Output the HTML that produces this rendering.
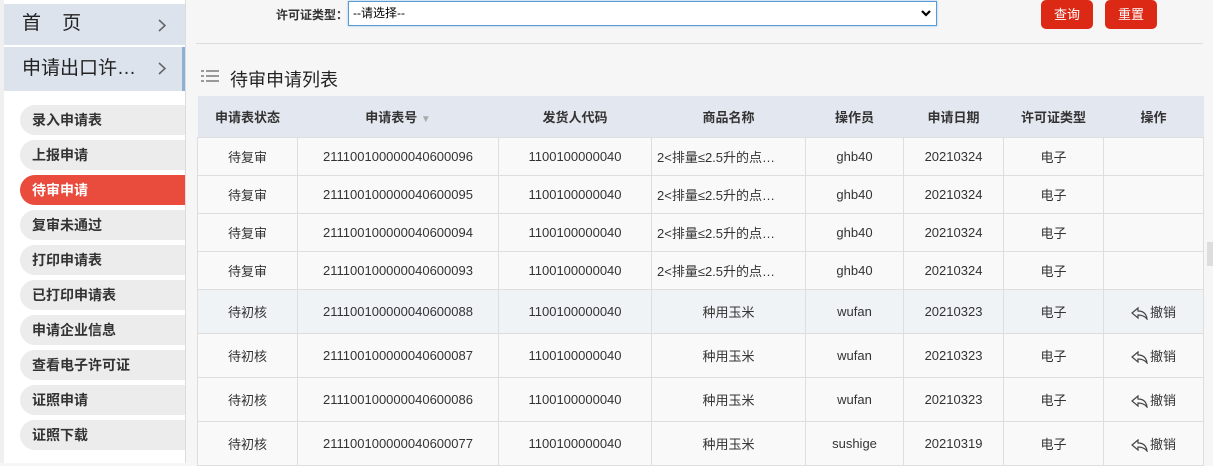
<!DOCTYPE html><html><head><meta charset="utf-8"><style>
*{margin:0;padding:0;box-sizing:border-box}
body{width:1213px;height:463px;overflow:hidden;background:#f6f6f6;font-family:"Liberation Sans","Noto Sans CJK SC",sans-serif;position:relative;color:#333}
.sb{position:absolute;left:0;top:0;width:186px;height:463px;background:#fff;border-right:1px solid #dcdcdc}
.sb:before{content:"";position:absolute;left:0;top:0;width:4px;height:463px;background:#f0f0f0}
.top{position:absolute;left:4px;width:181px;background:#dde3ec;font-size:19px;color:#222;padding-left:18px}
.top svg{position:absolute;right:19px;top:15px}
.sub{position:absolute;left:20px;width:165px;height:30px;background:#ececec;border-radius:15px 0 0 15px;font-size:14px;font-weight:bold;color:#333;line-height:30px;padding-left:12px}
.sub.on{background:#e94b3c;color:#fff}
.lbl{position:absolute;left:276px;top:6px;font-size:12px;font-weight:bold;color:#333}
.sel{position:absolute;left:348px;top:1px;width:589px;height:25px;border:1px solid #5b9bd5;background:#fff;font-size:12px;line-height:23px;padding-left:4px;color:#000;box-shadow:0 0 2px #8bbde8}
.btn{position:absolute;top:0;width:52px;height:29px;background:#dc2916;border-radius:5px;color:#fff;font-size:13px;text-align:center;line-height:29px}
.hr{position:absolute;left:196px;top:43px;width:1007px;height:1px;background:#ddd}
.title{position:absolute;left:230px;top:66px;font-size:18px;color:#222}
table{position:absolute;left:197px;top:96px;border-collapse:collapse;font-size:13px;table-layout:fixed}
th{background:#e3e7ef;height:41px;font-weight:bold;color:#333;border:none}
td{border:1px solid #dedede;text-align:center;background:#f9f9f9;color:#333;white-space:nowrap;overflow:hidden}
tr.a td{height:38px}tr.b td{height:44px}
tr.h td{background:#f0f3f6}
.ud svg{vertical-align:-3px;margin-right:1px}
</style></head><body>
<div class="sb">
<div class="top" style="top:4px;height:41px;line-height:40px">首&nbsp;&nbsp;&nbsp;&nbsp;页<svg width="8" height="13"><path d="M1 1L7 6.5L1 12" stroke="#666" stroke-width="1.6" fill="none"/></svg></div>
<div class="top" style="top:47px;height:44px;line-height:44px;border-right:3px solid #8fb0d6">申请出口许…<svg width="8" height="13" style="right:16px"><path d="M1 1L7 6.5L1 12" stroke="#666" stroke-width="1.6" fill="none"/></svg></div>
<div class="sub" style="top:105px">录入申请表</div>
<div class="sub" style="top:140px">上报申请</div>
<div class="sub on" style="top:175px">待审申请</div>
<div class="sub" style="top:210px">复审未通过</div>
<div class="sub" style="top:245px">打印申请表</div>
<div class="sub" style="top:280px">已打印申请表</div>
<div class="sub" style="top:315px">申请企业信息</div>
<div class="sub" style="top:350px">查看电子许可证</div>
<div class="sub" style="top:385px">证照申请</div>
<div class="sub" style="top:420px">证照下载</div>
</div>
<div class="lbl">许可证类型：</div>
<div class="sel">--请选择--<svg style="position:absolute;right:5px;top:8px" width="10" height="7"><path d="M1 1L5 5L9 1" stroke="#000" stroke-width="2.2" fill="none"/></svg></div>
<div class="btn" style="left:1041px">查询</div>
<div class="btn" style="left:1105px">重置</div>
<div class="hr"></div>
<svg style="position:absolute;left:201px;top:69px" width="19" height="15"><g fill="#999"><rect x="0" y="1" width="3" height="2"/><rect x="0" y="6" width="3" height="2"/><rect x="0" y="11" width="3" height="2"/><rect x="5" y="1" width="13" height="2"/><rect x="5" y="6" width="13" height="2"/><rect x="5" y="11" width="13" height="2"/></g></svg>
<div class="title">待审申请列表</div>
<table>
<colgroup><col style="width:100px"><col style="width:201px"><col style="width:153px"><col style="width:154px"><col style="width:98px"><col style="width:100px"><col style="width:100px"><col style="width:100px"></colgroup>
<tr><th>申请表状态</th><th>申请表号 <span style="color:#aaa;font-size:10px">▼</span></th><th>发货人代码</th><th>商品名称</th><th>操作员</th><th>申请日期</th><th>许可证类型</th><th>操作</th></tr>
<tr class="a"><td>待复审</td><td>211100100000040600096</td><td>1100100000040</td><td style="text-align:left;padding-left:5px">2&lt;排量≤2.5升的点…</td><td>ghb40</td><td>20210324</td><td>电子</td><td></td></tr>
<tr class="a"><td>待复审</td><td>211100100000040600095</td><td>1100100000040</td><td style="text-align:left;padding-left:5px">2&lt;排量≤2.5升的点…</td><td>ghb40</td><td>20210324</td><td>电子</td><td></td></tr>
<tr class="a"><td>待复审</td><td>211100100000040600094</td><td>1100100000040</td><td style="text-align:left;padding-left:5px">2&lt;排量≤2.5升的点…</td><td>ghb40</td><td>20210324</td><td>电子</td><td></td></tr>
<tr class="a"><td>待复审</td><td>211100100000040600093</td><td>1100100000040</td><td style="text-align:left;padding-left:5px">2&lt;排量≤2.5升的点…</td><td>ghb40</td><td>20210324</td><td>电子</td><td></td></tr>
<tr class="b h"><td>待初核</td><td>211100100000040600088</td><td>1100100000040</td><td>种用玉米</td><td>wufan</td><td>20210323</td><td>电子</td><td class="ud"><svg width="18" height="14"><path d="M7 2L1 7L7 12V9Q13 9 16 13Q15 5 7 5Z" stroke="#444" stroke-width="1.2" fill="none"/></svg>撤销</td></tr>
<tr class="b"><td>待初核</td><td>211100100000040600087</td><td>1100100000040</td><td>种用玉米</td><td>wufan</td><td>20210323</td><td>电子</td><td class="ud"><svg width="18" height="14"><path d="M7 2L1 7L7 12V9Q13 9 16 13Q15 5 7 5Z" stroke="#444" stroke-width="1.2" fill="none"/></svg>撤销</td></tr>
<tr class="b"><td>待初核</td><td>211100100000040600086</td><td>1100100000040</td><td>种用玉米</td><td>wufan</td><td>20210323</td><td>电子</td><td class="ud"><svg width="18" height="14"><path d="M7 2L1 7L7 12V9Q13 9 16 13Q15 5 7 5Z" stroke="#444" stroke-width="1.2" fill="none"/></svg>撤销</td></tr>
<tr class="b"><td>待初核</td><td>211100100000040600077</td><td>1100100000040</td><td>种用玉米</td><td>sushige</td><td>20210319</td><td>电子</td><td class="ud"><svg width="18" height="14"><path d="M7 2L1 7L7 12V9Q13 9 16 13Q15 5 7 5Z" stroke="#444" stroke-width="1.2" fill="none"/></svg>撤销</td></tr>
</table>
<div style="position:absolute;left:1207px;top:242px;width:6px;height:24px;background:#ddd"></div>
</body></html>
